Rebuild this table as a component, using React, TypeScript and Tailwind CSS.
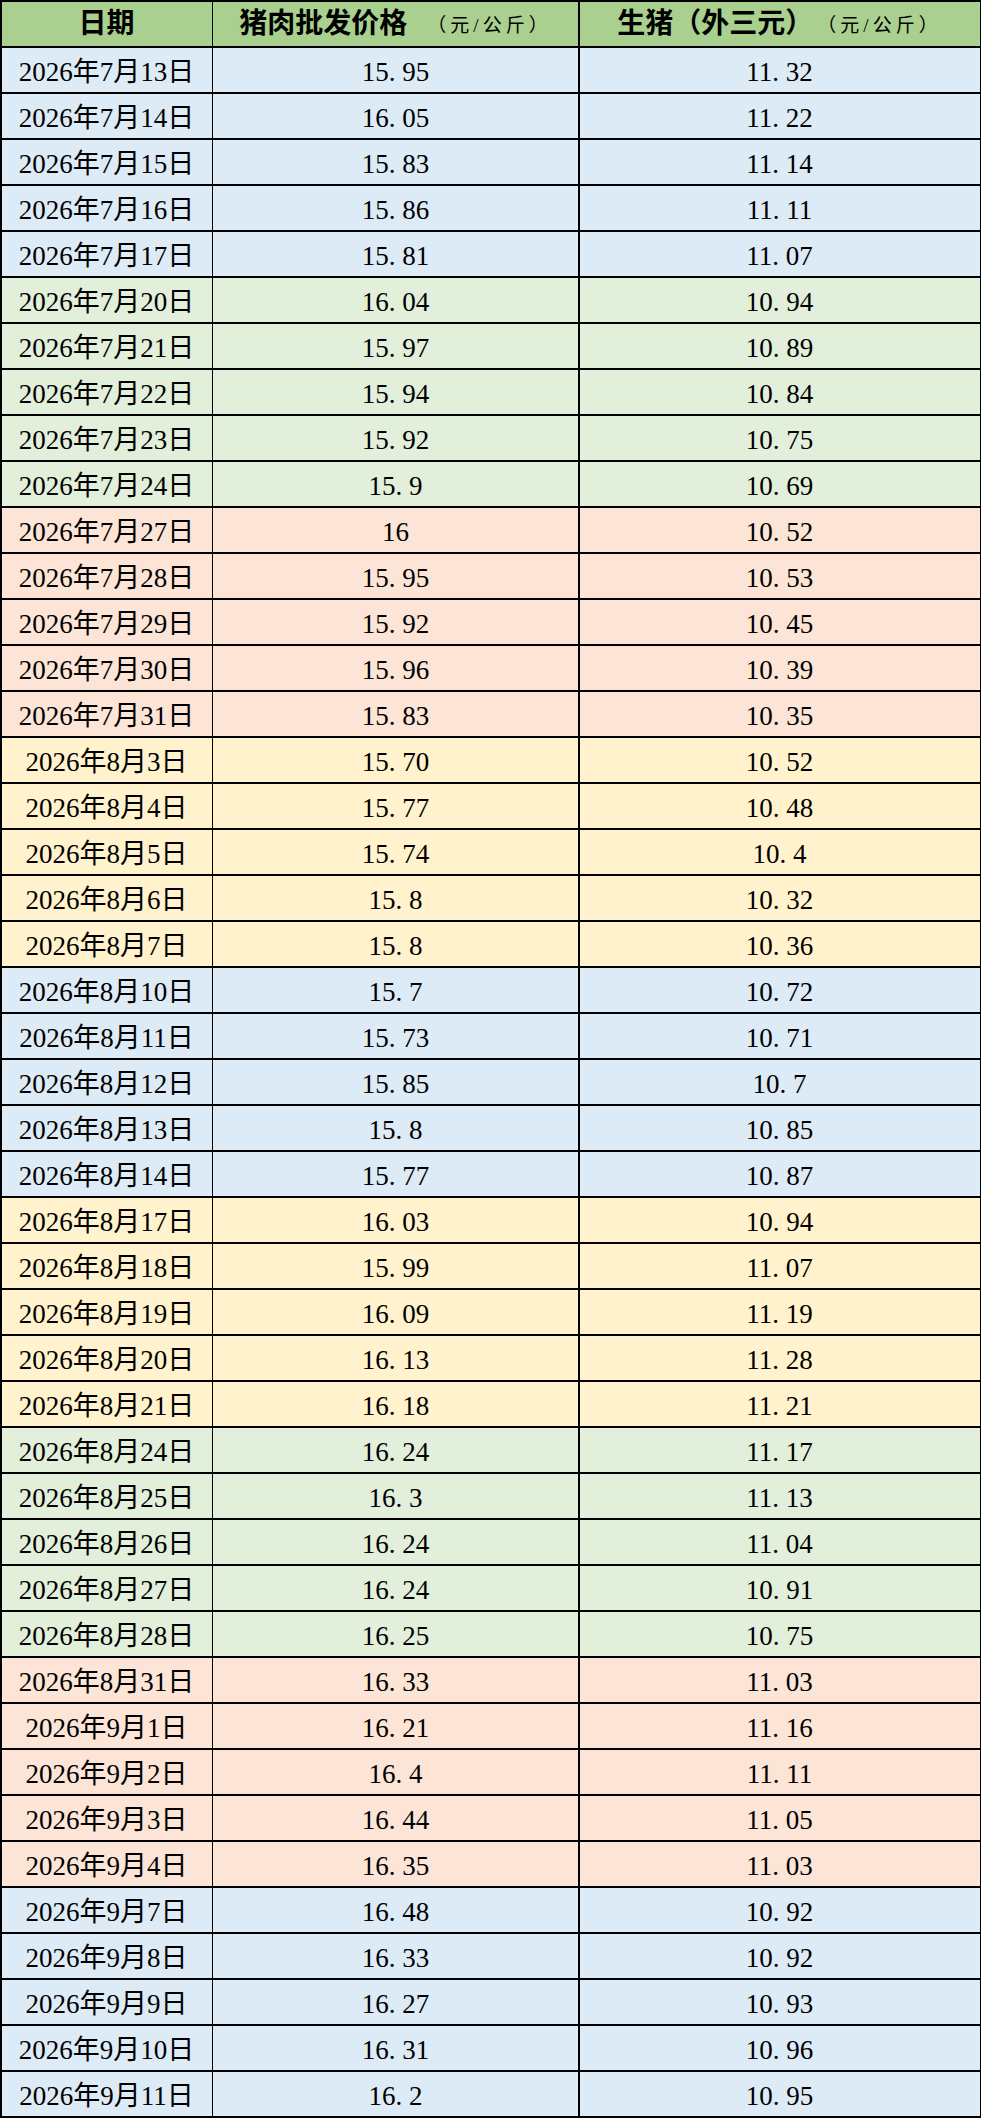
import React from "react";

type Row = [string, string, string];

const groups: { color: string; rows: Row[] }[] = [
  {
    color: "bg-[#ddebf7]",
    rows: [
      ["2026年7月13日", "15.95", "11.32"],
      ["2026年7月14日", "16.05", "11.22"],
      ["2026年7月15日", "15.83", "11.14"],
      ["2026年7月16日", "15.86", "11.11"],
      ["2026年7月17日", "15.81", "11.07"],
    ],
  },
  {
    color: "bg-[#e2efda]",
    rows: [
      ["2026年7月20日", "16.04", "10.94"],
      ["2026年7月21日", "15.97", "10.89"],
      ["2026年7月22日", "15.94", "10.84"],
      ["2026年7月23日", "15.92", "10.75"],
      ["2026年7月24日", "15.9", "10.69"],
    ],
  },
  {
    color: "bg-[#fce4d6]",
    rows: [
      ["2026年7月27日", "16", "10.52"],
      ["2026年7月28日", "15.95", "10.53"],
      ["2026年7月29日", "15.92", "10.45"],
      ["2026年7月30日", "15.96", "10.39"],
      ["2026年7月31日", "15.83", "10.35"],
    ],
  },
  {
    color: "bg-[#fff2cc]",
    rows: [
      ["2026年8月3日", "15.70", "10.52"],
      ["2026年8月4日", "15.77", "10.48"],
      ["2026年8月5日", "15.74", "10.4"],
      ["2026年8月6日", "15.8", "10.32"],
      ["2026年8月7日", "15.8", "10.36"],
    ],
  },
  {
    color: "bg-[#ddebf7]",
    rows: [
      ["2026年8月10日", "15.7", "10.72"],
      ["2026年8月11日", "15.73", "10.71"],
      ["2026年8月12日", "15.85", "10.7"],
      ["2026年8月13日", "15.8", "10.85"],
      ["2026年8月14日", "15.77", "10.87"],
    ],
  },
  {
    color: "bg-[#fff2cc]",
    rows: [
      ["2026年8月17日", "16.03", "10.94"],
      ["2026年8月18日", "15.99", "11.07"],
      ["2026年8月19日", "16.09", "11.19"],
      ["2026年8月20日", "16.13", "11.28"],
      ["2026年8月21日", "16.18", "11.21"],
    ],
  },
  {
    color: "bg-[#e2efda]",
    rows: [
      ["2026年8月24日", "16.24", "11.17"],
      ["2026年8月25日", "16.3", "11.13"],
      ["2026年8月26日", "16.24", "11.04"],
      ["2026年8月27日", "16.24", "10.91"],
      ["2026年8月28日", "16.25", "10.75"],
    ],
  },
  {
    color: "bg-[#fce4d6]",
    rows: [
      ["2026年8月31日", "16.33", "11.03"],
      ["2026年9月1日", "16.21", "11.16"],
      ["2026年9月2日", "16.4", "11.11"],
      ["2026年9月3日", "16.44", "11.05"],
      ["2026年9月4日", "16.35", "11.03"],
    ],
  },
  {
    color: "bg-[#ddebf7]",
    rows: [
      ["2026年9月7日", "16.48", "10.92"],
      ["2026年9月8日", "16.33", "10.92"],
      ["2026年9月9日", "16.27", "10.93"],
      ["2026年9月10日", "16.31", "10.96"],
      ["2026年9月11日", "16.2", "10.95"],
    ],
  },
];

function Num({ v }: { v: string }) {
  const parts = v.split(".");
  if (parts.length === 1) return <span>{v}</span>;
  return (
    <span className="whitespace-nowrap">
      {parts[0]}
      <span className="inline-block w-[0.5em]">.</span>
      {parts[1]}
    </span>
  );
}

export default function App() {
  const font = "font-['Liberation_Serif','Noto_Sans_CJK_SC',serif]";
  const cell = "flex items-center justify-center";
  return (
    <div className={`w-[981px] bg-white ${font} text-black`}>
      <div className="grid grid-cols-[210px_365px_1fr] auto-rows-[44.5px] gap-[1.5px] bg-black p-[1.5px]">
        <div className={`${cell} bg-[#a9d08e] text-[28px] font-bold`}>日期</div>
        <div className={`${cell} bg-[#a9d08e] gap-5`}>
          <span className="text-[28px] font-bold">猪肉批发价格</span>
          <span className="text-[19px] tracking-[4px] pt-1">（元/公斤）</span>
        </div>
        <div className={`${cell} bg-[#a9d08e] gap-1`}>
          <span className="text-[28px] font-bold">生猪（外三元）</span>
          <span className="text-[19px] tracking-[4px] pt-1">（元/公斤）</span>
        </div>
        {groups.map((g) =>
          g.rows.map((r) => (
            <React.Fragment key={r[0]}>
              <div className={`${cell} ${g.color} text-[27px] pt-1`}>{r[0]}</div>
              <div className={`${cell} ${g.color} text-[27px] pt-1`}>
                <Num v={r[1]} />
              </div>
              <div className={`${cell} ${g.color} text-[27px] pt-1`}>
                <Num v={r[2]} />
              </div>
            </React.Fragment>
          ))
        )}
      </div>
    </div>
  );
}
